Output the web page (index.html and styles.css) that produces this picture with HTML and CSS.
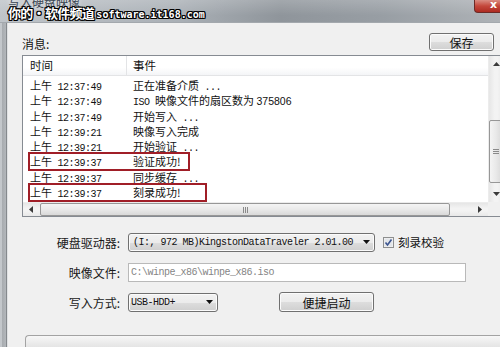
FILE: index.html
```html
<!DOCTYPE html>
<html>

<head>
    <meta charset="utf-8">
    <meta name="viewport" content="width=device-width, initial-scale=1.0" />
    <title>写入硬盘映像</title>
    <link rel="stylesheet" href="styles.css">
</head>

<body>
    <div class="window">
        <div class="titlebar">
            <span class="title">写入硬盘映像</span>
            <div class="close">x</div>
        </div>
        <div class="watermark">你的•软件频道 <span class="wm-url">software.it168.com</span></div>

        <div class="main">
            <div class="side"></div>
            <div class="client">
                <div class="toprow">
                    <span class="label">消息:</span>
                    <div class="btn save">保存</div>
                </div>

                <div class="list">
                    <div class="table">
                        <div class="thead">
                            <div class="c1">时间</div>
                            <div class="c2">事件</div>
                        </div>
                        <div class="rows">
                            <div class="row"><div class="c1">上午<span class="mono"> 12:37:49</span></div><div class="c2">正在准备介质<span class="mono"> ...</span></div></div>
                            <div class="row"><div class="c1">上午<span class="mono"> 12:37:49</span></div><div class="c2"><span class="mono">ISO </span>映像文件的扇区数为 <span class="num">375806</span></div></div>
                            <div class="row"><div class="c1">上午<span class="mono"> 12:37:49</span></div><div class="c2">开始写入<span class="mono"> ...</span></div></div>
                            <div class="row"><div class="c1">上午<span class="mono"> 12:39:21</span></div><div class="c2">映像写入完成</div></div>
                            <div class="row"><div class="c1">上午<span class="mono"> 12:39:21</span></div><div class="c2">开始验证<span class="mono"> ...</span></div></div>
                            <div class="row mark mark-a"><div class="c1">上午<span class="mono"> 12:39:37</span></div><div class="c2">验证成功!</div></div>
                            <div class="row"><div class="c1">上午<span class="mono"> 12:39:37</span></div><div class="c2">同步缓存<span class="mono"> ...</span></div></div>
                            <div class="row mark mark-b"><div class="c1">上午<span class="mono"> 12:39:37</span></div><div class="c2">刻录成功!</div></div>
                        </div>
                    </div>

                    <div class="vscroll">
                        <div class="sb-btn v-btn">
                            <svg width="7" height="4" viewBox="0 0 7 4"><polygon points="0,4 3.5,0 7,4" fill="#3a3a3a"/></svg>
                        </div>
                        <div class="vthumb"><span></span><span></span><span></span></div>
                        <div class="sb-space"></div>
                        <div class="sb-btn v-btn">
                            <svg width="7" height="4" viewBox="0 0 7 4"><polygon points="0,0 3.5,4 7,0" fill="#3a3a3a"/></svg>
                        </div>
                    </div>

                    <div class="hscroll">
                        <div class="sb-btn h-btn">
                            <svg width="4" height="7" viewBox="0 0 4 7"><polygon points="4,0 0,3.5 4,7" fill="#3a3a3a"/></svg>
                        </div>
                        <div class="hthumb"><span></span><span></span><span></span></div>
                        <div class="sb-space"></div>
                        <div class="sb-btn h-btn h-right">
                            <svg width="4" height="7" viewBox="0 0 4 7"><polygon points="0,0 4,3.5 0,7" fill="#3a3a3a"/></svg>
                        </div>
                    </div>
                    <div class="corner"></div>
                </div>

                <div class="form">
                    <div class="flabel">硬盘驱动器:</div>
                    <div class="fctl">
                        <div class="combo drive">
                            <span class="mono">(I:, 972 MB)KingstonDataTraveler 2.01.00</span>
                            <svg class="arrow" width="7" height="4" viewBox="0 0 7 4"><polygon points="0,0 3.5,4 7,0" fill="#111"/></svg>
                        </div>
                        <svg class="check" width="11" height="11" viewBox="0 0 11 11">
                            <rect x="0.5" y="0.5" width="10" height="10" fill="#f4f4f4" stroke="#8e8f8f"/>
                            <rect x="1.5" y="1.5" width="8" height="8" fill="#e3e6ea"/>
                            <polyline points="2.5,5.5 4.5,8 8.5,2.5" fill="none" stroke="#3c5590" stroke-width="1.6"/>
                        </svg>
                        <span class="check-label">刻录校验</span>
                    </div>

                    <div class="flabel">映像文件:</div>
                    <div class="fctl">
                        <div class="field"><span class="mono">C:\winpe_x86\winpe_x86.iso</span></div>
                    </div>

                    <div class="flabel">写入方式:</div>
                    <div class="fctl">
                        <div class="combo mode">
                            <span class="mono">USB-HDD+</span>
                            <svg class="arrow" width="7" height="4" viewBox="0 0 7 4"><polygon points="0,0 3.5,4 7,0" fill="#111"/></svg>
                        </div>
                        <div class="btn quick">便捷启动</div>
                    </div>
                </div>

                <div class="progress"></div>
            </div>
        </div>
    </div>
</body>

</html>
```

FILE: styles.css
```css
html,
body {
    margin: 0;
    padding: 0;
}

body {
    width: 500px;
    height: 347px;
    overflow: hidden;
    background: #f0f0f0;
    font-family: "Noto Sans CJK SC", sans-serif;
    color: #111;
}

.window {
    position: relative;
    width: 510px;
    height: 347px;
    overflow: hidden;
}

/* title bar */

.titlebar {
    display: flex;
    align-items: flex-start;
    height: 22px;
    background:
        linear-gradient(rgba(255, 255, 255, 0.18), rgba(255, 255, 255, 0) 70%),
        linear-gradient(to right, #bfc4c9 0%, #aab0b6 35%, #8f959b 55%, #989ea4 75%, #b0b4b8 100%);
}

.title {
    margin-top: -6px;
    padding-left: 8px;
    font-size: 12px;
    line-height: 16px;
    color: #3a4652;
    text-shadow: 0 0 5px rgba(255, 255, 255, 0.8);
}

.close {
    margin-left: auto;
    width: 36px;
    height: 13px;
    box-sizing: border-box;
    border: 1px solid #6c2a26;
    border-top: none;
    border-right: none;
    border-radius: 0 0 0 4px;
    background: linear-gradient(#d98c82, #c4473b 50%, #ad2b21);
    color: #fff;
    font-family: "DejaVu Sans", sans-serif;
    font-weight: bold;
    font-size: 11px;
    line-height: 10px;
    text-align: center;
    text-indent: 2px;
}

.watermark {
    position: absolute;
    left: 8px;
    top: 3px;
    font-size: 13px;
    font-weight: bold;
    line-height: 20px;
    letter-spacing: -0.7px;
    color: #fff;
    white-space: nowrap;
    text-shadow: 1px 0 #000, -1px 0 #000, 0 1px #000, 0 -1px #000,
        1px 1px #000, -1px -1px #000, 1px -1px #000, -1px 1px #000;
}

.wm-url {
    font-family: "DejaVu Sans Mono", monospace;
    font-size: 10px;
    letter-spacing: 0;
}

/* window body */

.main {
    display: flex;
    height: 325px;
    border-top: 1px solid #a3a8ad;
}

.side {
    width: 8px;
    flex: none;
    background: linear-gradient(to right, #c3c7cb 0, #c3c7cb 2px, #a7abaf 2px, #b3b7bb 6px, #85898d 6px, #85898d 7px, #dfe1e3 7px);
}

.client {
    width: 488px;
    flex: none;
    padding: 10px 0 0 14px;
    background: #f0f0f0;
}

.toprow {
    display: flex;
    justify-content: space-between;
    align-items: flex-end;
    width: 472px;
    height: 18px;
}

.label {
    font-size: 12px;
    line-height: 14px;
}

.btn {
    box-sizing: border-box;
    display: flex;
    align-items: center;
    justify-content: center;
    border: 1px solid #707070;
    border-radius: 3px;
    background: linear-gradient(#f2f2f2 0%, #ebebeb 50%, #dddddd 51%, #cfcfcf 100%);
    box-shadow: inset 0 0 0 1px #fbfbfb;
    font-size: 12px;
}

.save {
    width: 65px;
    height: 18px;
}

/* message list */

.list {
    box-sizing: border-box;
    margin-top: 4px;
    width: 482px;
    height: 162px;
    border: 1px solid #868b92;
    background: #fff;
    display: grid;
    grid-template-columns: 1fr 15px;
    grid-template-rows: 146px 14px;
}

.table {
    overflow: hidden;
    white-space: nowrap;
}

.thead {
    display: flex;
    box-sizing: border-box;
    height: 20px;
    border-bottom: 1px solid #e3e4e6;
    background: linear-gradient(#ffffff, #ffffff 60%, #f4f5f7);
    font-size: 11.5px;
    line-height: 19px;
}

.thead .c1 {
    border-right: 1px solid #e3e4e6;
}

.c1 {
    box-sizing: border-box;
    width: 104px;
    flex: none;
    padding-left: 7px;
}

.c2 {
    padding-left: 6px;
}

.rows {
    padding-top: 2px;
}

.row {
    display: flex;
    height: 15.25px;
    font-size: 11px;
    line-height: 15.25px;
}

.mono {
    font-family: "Liberation Mono", monospace;
    font-size: 10px;
    letter-spacing: -0.5px;
    white-space: pre;
}

.num {
    font-family: "Liberation Sans", sans-serif;
    font-size: 10.5px;
}

.mark {
    position: relative;
}

.mark::after {
    content: "";
    position: absolute;
    left: 5px;
    top: -2px;
    height: 19px;
    box-sizing: border-box;
    border: 2px solid #a01e27;
}

.mark-a::after {
    width: 162px;
}

.mark-b::after {
    width: 179px;
}

/* scroll bars */

.vscroll {
    display: flex;
    flex-direction: column;
    background: linear-gradient(to right, #e6e6e6, #f3f3f3 40%, #f3f3f3 60%, #e8e8e8);
    border-left: 1px solid #ececec;
}

.hscroll {
    display: flex;
    background: linear-gradient(#e6e6e6, #f3f3f3 40%, #f3f3f3 60%, #e8e8e8);
    border-top: 1px solid #ececec;
}

.corner {
    background: #f0f0f0;
}

.sb-btn {
    display: flex;
    align-items: center;
    justify-content: center;
    flex: none;
}

.v-btn {
    height: 16px;
}

.h-btn {
    width: 15px;
}

.h-right {
    width: 17px;
}

.sb-space {
    flex: 1;
}

.vthumb,
.hthumb {
    box-sizing: border-box;
    display: flex;
    align-items: center;
    justify-content: center;
    border: 1px solid #979797;
    border-radius: 2px;
    flex: none;
}

.vthumb {
    flex-direction: column;
    gap: 1px;
    margin: 48px 0 0 0;
    width: 14px;
    height: 63px;
    background: linear-gradient(to right, #f4f4f4, #e9e9e9 50%, #d9d9d9);
}

.vthumb span {
    width: 6px;
    height: 1px;
    background: #8a8a8a;
}

.hthumb {
    gap: 1px;
    margin-left: 2px;
    width: 410px;
    height: 13px;
    background: linear-gradient(#f4f4f4, #e9e9e9 50%, #d9d9d9);
}

.hthumb span {
    width: 1px;
    height: 6px;
    background: #8a8a8a;
}

/* drive form */

.form {
    display: grid;
    grid-template-columns: 98px auto;
    grid-auto-rows: 30px;
    column-gap: 8px;
    align-items: center;
    margin-top: 10px;
}

.flabel {
    text-align: right;
    font-size: 12px;
    color: #1a1a1a;
}

.fctl {
    display: flex;
    align-items: center;
}

.combo {
    box-sizing: border-box;
    display: flex;
    align-items: center;
    height: 19px;
    border: 1px solid #707070;
    border-radius: 3px;
    background: linear-gradient(#f2f2f2 0%, #ebebeb 50%, #dddddd 51%, #cfcfcf 100%);
    box-shadow: inset 0 0 0 1px #fbfbfb;
    white-space: nowrap;
}

.combo .arrow {
    margin-left: auto;
    margin-right: 4px;
    flex: none;
}

.drive {
    width: 247px;
    padding-left: 4px;
}

.mode {
    width: 90px;
    padding-left: 2px;
}

.check {
    margin-left: 8px;
    flex: none;
}

.check-label {
    margin-left: 4px;
    font-size: 11.5px;
}

.field {
    box-sizing: border-box;
    display: flex;
    align-items: center;
    width: 338px;
    height: 19px;
    padding-left: 2px;
    border: 1px solid #b9b9b9;
    background: #fff;
    color: #858585;
}

.quick {
    margin-left: 61px;
    width: 95px;
    height: 20px;
}

.progress {
    margin: 18px 0 0 3px;
    height: 20px;
    border: 1px solid #a3a3a3;
    border-right: none;
    border-radius: 4px 0 0 0;
    background: linear-gradient(#f7f7f7, #e6e6e6 50%, #d9d9d9);
}
```
